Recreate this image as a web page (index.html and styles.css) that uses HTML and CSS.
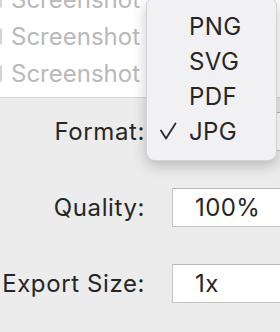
FILE: index.html
```html
<!DOCTYPE html>
<html>
  <head>
    <title>Export Options</title>
    <link rel="stylesheet" href="styles.css">
  </head>
  <body>
    <div class="window">
      <div class="file-list">
        <ul class="files">
          <li><span class="check"></span>Screenshot</li>
          <li><span class="check"></span>Screenshot</li>
          <li><span class="check"></span>Screenshot</li>
        </ul>
      </div>

      <div class="options">
        <label class="label">Format:</label>
        <div class="field popup-button"></div>

        <label class="label">Quality:</label>
        <div class="field">100%</div>

        <label class="label">Export Size:</label>
        <div class="field">1x</div>
      </div>

      <ul class="menu">
        <li>PNG</li>
        <li>SVG</li>
        <li>PDF</li>
        <li class="selected">
          <svg class="tick" width="18" height="20" viewBox="0 0 18 20">
            <path d="M2 9.5 L7 17.5 L16.5 2.5" fill="none" stroke="#2b2b2b" stroke-width="1.8" stroke-linecap="round" stroke-linejoin="round"/>
          </svg>
          JPG
        </li>
      </ul>
    </div>
  </body>
</html>
```

FILE: styles.css
```css
html,
body {
  margin: 0;
  height: 100%;
  overflow: hidden;
}

body {
  background: #ececec;
  font-family: Inter, "Liberation Sans", sans-serif;
  font-size: 24px;
  color: #262626;
}

.window {
  position: relative;
  height: 100%;
}

.file-list {
  background: #fff;
  height: 97px;
  overflow: hidden;
  border-bottom: 1px solid #d6d6d6;
}

.files {
  list-style: none;
  margin: -19px 0 0;
  padding: 0;
}

.files > li {
  height: 37px;
  display: flex;
  align-items: center;
  color: #b9b9b9;
}

.check {
  width: 2px;
  height: 17px;
  margin-right: 9px;
  background: #d4d4d4;
  border-radius: 0 2px 2px 0;
}

.options {
  display: grid;
  grid-template-columns: 145px 150px;
  grid-auto-rows: 39px;
  column-gap: 27px;
  row-gap: 37px;
  margin-top: 14px;
}

.label {
  display: flex;
  align-items: center;
  justify-content: flex-end;
  letter-spacing: 0.6px;
}

.field {
  background: #fff;
  border: 1px solid #c4c4c4;
  border-top-color: #b8b8b8;
  box-sizing: border-box;
  display: flex;
  align-items: center;
  padding-left: 22px;
  letter-spacing: 0.4px;
}

.menu {
  position: absolute;
  left: 146px;
  top: -3px;
  width: 131px;
  box-sizing: border-box;
  margin: 0;
  padding: 11px 0;
  list-style: none;
  background: #f1f1f3;
  border: 1px solid rgba(0, 0, 0, 0.12);
  border-radius: 9px;
  box-shadow: 0 5px 14px rgba(0, 0, 0, 0.22);
  letter-spacing: 0.4px;
}

.menu > li {
  height: 35px;
  display: flex;
  align-items: center;
  padding-left: 42px;
  position: relative;
}

.tick {
  position: absolute;
  left: 12px;
  top: 7px;
}
```
